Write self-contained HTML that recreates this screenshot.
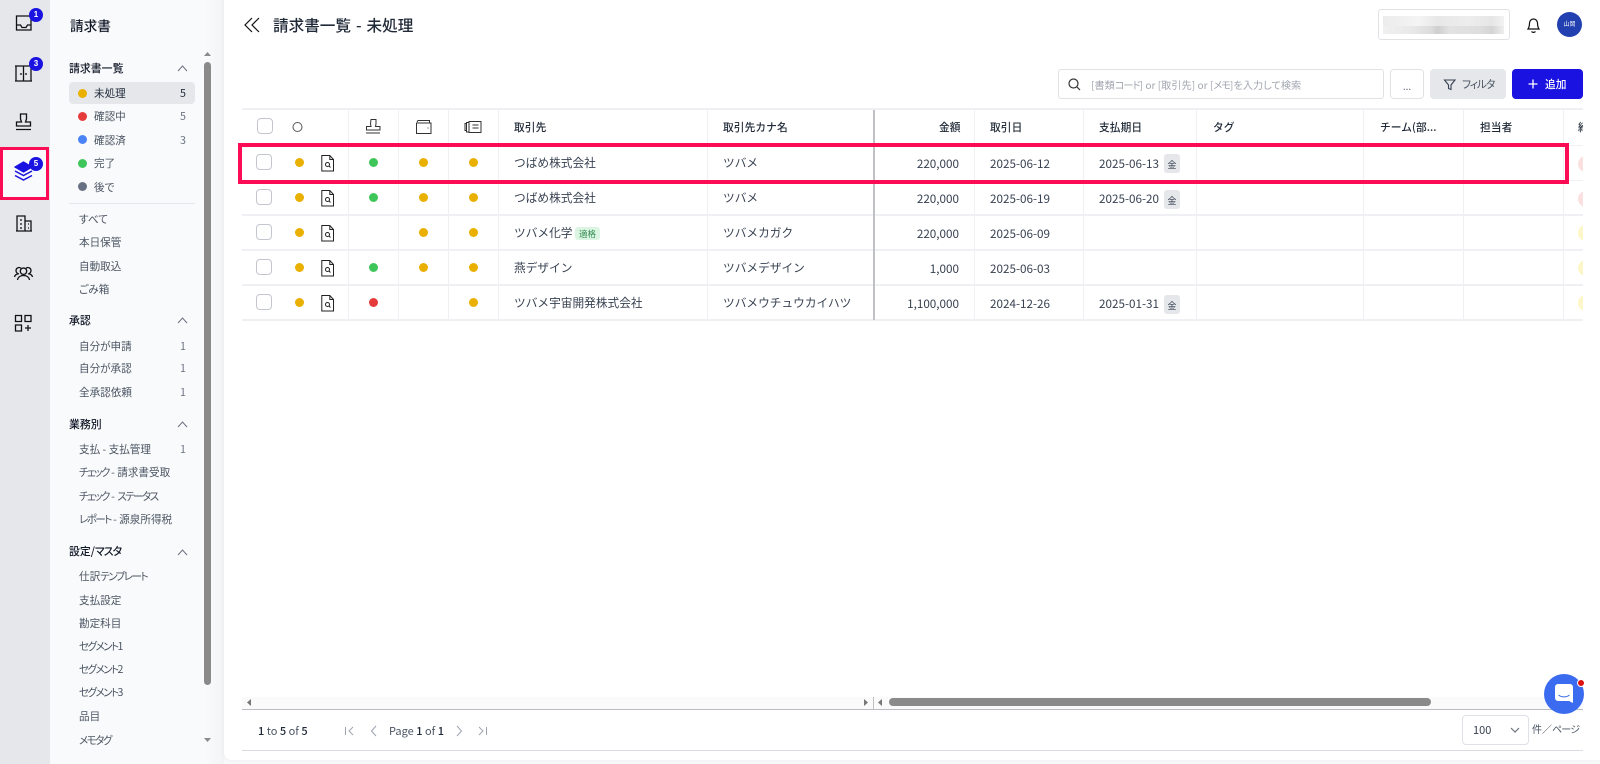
<!DOCTYPE html>
<html lang="ja"><head><meta charset="utf-8"><title>請求書一覧 - 未処理</title>
<style>
html,body{margin:0;padding:0;width:1600px;height:764px;overflow:hidden;background:#f8f9fa;}
body{position:relative;font-family:"Noto Sans CJK JP","Liberation Sans",sans-serif;}
.a{position:absolute}
.t{position:absolute;white-space:nowrap;line-height:20px;height:20px}
#rail{left:0;top:0;width:50px;height:764px;background:#e5e7eb}
#side{left:50px;top:0;width:174px;height:764px;background:linear-gradient(90deg,#f9fafb 0,#f9fafb 155px,#f3f4f6 174px)}
#main{left:224px;top:0;width:1376px;height:760px;background:#fff;border-bottom-left-radius:8px;box-shadow:0 0 5px rgba(0,0,0,.05)}
.s{font-size:10.6px;color:#4b5563;font-feature-settings:"palt";margin-top:1px}
.c{letter-spacing:-1.600px}
.h{font-size:10.9px;color:#111827;font-weight:500}
.n{font-size:10.7px;color:#6b7280;margin-top:1px}
.th{font-size:10.7px;color:#1f2937;font-weight:500;letter-spacing:.1px;margin-top:1px}
.td{font-size:11.7px;color:#374151;margin-top:1px}
.d{position:absolute;width:9px;height:9px;border-radius:50%}
.y{background:#eab000}.g{background:#3fc65a}.r{background:#e63b3b}.b{background:#4a83f5}.k{background:#687083}
.v{position:absolute;top:110px;height:210px;width:1px;background:#eef0f3}
.hl{position:absolute;left:242px;width:1341px;height:2px;background:#eef0f3}
.cb{position:absolute;left:256px;width:14px;height:14px;border:1.5px solid #c3c6ce;border-radius:4px;background:#fff}
.tag{position:absolute;left:1164px;width:16px;height:19px;background:#e5e7eb;border-radius:3px;font-size:9px;line-height:21px;text-align:center;color:#374151}
.badge{position:absolute;left:29px;width:14px;height:14px;border-radius:50%;background:#1a12e0;color:#fff;font:bold 8px/14px "Liberation Sans",sans-serif;text-align:center}
svg{position:absolute;overflow:visible}
</style></head><body>
<div id="rail" class="a"></div>
<div id="side" class="a"></div>
<div id="main" class="a"></div>
<div class="a" style="left:3px;top:150px;width:43px;height:47px;background:#f9fafb"></div>
<div class="a" style="left:0;top:147px;width:49px;height:53px;box-sizing:border-box;border:3px solid #fb0c55"></div>

<!-- rail icons -->
<svg style="left:0;top:0" width="50" height="340" fill="none" stroke="#111" stroke-width="1.3">
<path d="M16.5 16h14.5v14h-14.5z M16.5 25h4l1.5 2.5h4l1.5-2.5h3.5"/>
<path d="M15 66h17 M16 66v15h15v-15 M23.5 66v15 M15 81h17 M21 73v2 M26 73v2"/>
<path d="M20.500 114h6v5l-1 3h5v4h-14v-4h5l-1-3z M16 129.500h15"/>
<path d="M16 231h16 M17 231v-15h8v15 M25 221h6v10 M20 220h2 M20 224h2 M20 228h2 M28 224h1 M28 228h1"/>
<path d="M23.500 268a3.200 3.200 0 1 0 .01 0 M17.500 280c.5-3 3-4.500 6-4.500s5.500 1.500 6 4.500 M19 274c-2-.5-3-2-3-3.500a3 3 0 0 1 5-2.200 M28 274c2-.5 3-2 3-3.500a3 3 0 0 0-5-2.200 M14.500 277c.3-1.500 1.300-2.500 3-3 M32.500 277c-.3-1.500-1.300-2.500-3-3"/>
<path d="M15.500 315.500h6v6h-6z M25 315.500h6v6h-6z M15.500 325h6v6h-6z M28 325v6 M25 328h6"/>
<path d="M15 171l8.500 4.500 8.500-4.500 M15 175.500l8.500 4.500 8.500-4.500" stroke="#1a12e0" stroke-width="1.500"/>
<path d="M15 167l8.500-5 8.500 5-8.500 5z" fill="#1a12e0" stroke="#1a12e0"/>
</svg>
<div class="badge" style="top:8px">1</div>
<div class="badge" style="top:57px">3</div>
<div class="badge" style="top:157px">5</div>

<!-- sidebar -->
<div class="t" style="left:70px;top:15px;font-size:13.65px;color:#111827;font-weight:500">請求書</div>
<div class="t h" style="left:69px;top:58px">請求書一覧</div>
<div class="a" style="left:69px;top:82px;width:126px;height:22px;background:#e5e7eb;border-radius:4px"></div>
<div class="d y" style="left:78px;top:89px"></div><div class="t s" style="left:94px;top:83px;color:#1f2937">未処理</div><div class="t n" style="left:180px;top:83px;color:#1f2937">5</div>
<div class="d r" style="left:78px;top:112px"></div><div class="t s" style="left:94px;top:106px">確認中</div><div class="t n" style="left:180px;top:106px">5</div>
<div class="d b" style="left:78px;top:135px"></div><div class="t s" style="left:94px;top:130px">確認済</div><div class="t n" style="left:180px;top:130px">3</div>
<div class="d g" style="left:78px;top:159px"></div><div class="t s" style="left:94px;top:153px">完了</div>
<div class="d k" style="left:78px;top:182px"></div><div class="t s" style="left:94px;top:177px">後で</div>
<div class="a" style="left:69px;top:203px;width:126px;height:1px;background:#e5e7eb"></div>
<div class="t s" style="left:79px;top:209px">すべて</div>
<div class="t s" style="left:79px;top:232px">本日保管</div>
<div class="t s" style="left:79px;top:256px">自動取込</div>
<div class="t s" style="left:79px;top:279px">ごみ箱</div>
<div class="t h" style="left:69px;top:310px">承認</div>
<div class="t s" style="left:79px;top:336px">自分が申請</div><div class="t n" style="left:180px;top:336px">1</div>
<div class="t s" style="left:79px;top:358px">自分が承認</div><div class="t n" style="left:180px;top:358px">1</div>
<div class="t s" style="left:79px;top:382px">全承認依頼</div><div class="t n" style="left:180px;top:382px">1</div>
<div class="t h" style="left:69px;top:414px">業務別</div>
<div class="t s" style="left:79px;top:439px">支払 - 支払管理</div><div class="t n" style="left:180px;top:439px">1</div>
<div class="t s" style="left:79px;top:462px"><span class="c">チェック</span> - 請求書受取</div>
<div class="t s" style="left:79px;top:486px"><span class="c">チェック</span> - <span class="c">ステータス</span></div>
<div class="t s" style="left:79px;top:509px"><span class="c">レポート</span> - 源泉所得税</div>
<div class="t h" style="left:69px;top:541px;font-feature-settings:'palt'">設定/<span style="letter-spacing:-1px">マスタ</span></div>
<div class="t s" style="left:79px;top:566px">仕訳<span class="c">テンプレート</span></div>
<div class="t s" style="left:79px;top:590px">支払設定</div>
<div class="t s" style="left:79px;top:613px">勘定科目</div>
<div class="t s" style="left:79px;top:636px"><span class="c">セグメント</span>1</div>
<div class="t s" style="left:79px;top:659px"><span class="c">セグメント</span>2</div>
<div class="t s" style="left:79px;top:682px"><span class="c">セグメント</span>3</div>
<div class="t s" style="left:79px;top:706px">品目</div>
<div class="t s" style="left:79px;top:730px"><span class="c">メモタグ</span></div>
<svg style="left:0;top:0" width="224" height="764" fill="none" stroke="#6b7280" stroke-width="1">
<path d="M178 71l4.500-5 4.500 5 M178 323l4.500-5 4.500 5 M178 427l4.500-5 4.500 5 M178 555l4.500-5 4.500 5"/>
<path d="M204 56l3.500-4 3.500 4z M204 738l3.500 4 3.500-4z" fill="#8a8a8a" stroke="none"/>
</svg>
<div class="a" style="left:204px;top:62px;width:7px;height:623px;background:#8a8a8a;border-radius:4px"></div>

<!-- top bar -->
<svg style="left:244px;top:17px" width="16" height="16" fill="none" stroke="#111" stroke-width="1.200"><path d="M8 1l-7 7 7 7 M15 1l-7 7 7 7"/></svg>
<div class="t" style="left:273px;top:14px;font-size:15.600px;color:#1f2937;font-weight:500;height:22px;line-height:22px;word-spacing:1.500px">請求書一覧 - 未処理</div>
<div class="a" style="left:1378px;top:9px;width:130px;height:29px;border:1px solid #e0e2e6;border-radius:3px;background:#fff"></div>
<div class="a" style="left:1383px;top:16px;width:121px;height:18px;background:linear-gradient(90deg,#ececec,#f4f4f4 30%,#e8e8e8 45%,#ededed 70%,#e6e6e6 90%,#f2f2f2)"></div>
<div class="a" style="left:1383px;top:26px;width:121px;height:8px;background:linear-gradient(90deg,#f0f0f0,#e8e8e8 25%,#dcdcdc 40%,#cfcfcf 45%,#e2e2e2 55%,#dedede 80%,#d4d4d4 90%,#eee)"></div>
<svg style="left:1526px;top:16px" width="15" height="18" fill="none" stroke="#111" stroke-width="1.200"><path d="M2 13c1-1.500 1.500-2.500 1.500-6a4 4 0 0 1 8 0c0 3.500.5 4.500 1.500 6z M5.500 15.500c1 1.200 3 1.200 4 0"/></svg>
<div class="a" style="left:1557px;top:12px;width:25px;height:25px;border-radius:50%;background:#2240b0;color:#fff;font-size:6px;line-height:24px;text-align:center">山岡</div>

<!-- toolbar -->
<div class="a" style="left:1058px;top:69px;width:324px;height:28px;border:1px solid #e0e2e6;border-radius:3px;background:#fff"></div>
<svg style="left:1068px;top:78px" width="13" height="13" fill="none" stroke="#333" stroke-width="1.200"><circle cx="5.500" cy="5.500" r="4.500"/><path d="M9 9l3 3"/></svg>
<div class="t" style="left:1091px;top:75px;font-size:10.2px;color:#a1a6b0;font-feature-settings:'palt'">[書類<span style="letter-spacing:-1px">コード</span>] or [取引先] or [<span style="letter-spacing:-1px">メモ</span>]を入力して検索</div>
<div class="a" style="left:1390px;top:69px;width:32px;height:28px;border:1px solid #e0e2e6;border-radius:4px;background:#fff;font-size:10px;line-height:32px;text-align:center;color:#6b7280">...</div>
<div class="a" style="left:1430px;top:69px;width:76px;height:30px;background:#e5e7eb;border-radius:4px"></div>
<svg style="left:1444px;top:79px" width="12" height="12" fill="none" stroke="#374151" stroke-width="1.100"><path d="M.5 1h10.500l-4 5v4.500l-2.500-1v-3.500z"/></svg>
<div class="t" style="left:1462px;top:75px;font-size:10.7px;color:#4b5563;font-feature-settings:'palt';letter-spacing:-1px">フィルタ</div>
<div class="a" style="left:1512px;top:69px;width:71px;height:30px;background:#1a12e0;border-radius:4px"></div>
<svg style="left:1528px;top:79px" width="10" height="10" fill="none" stroke="#fff" stroke-width="1.300"><path d="M5 .5v9 M.5 5h9"/></svg>
<div class="t" style="left:1545px;top:75px;font-size:10.7px;color:#fff;font-weight:500">追加</div>

<!-- table -->
<div class="hl" style="top:108px"></div>
<div class="hl" style="top:145px;height:1px"></div>
<div class="hl" style="top:180px;height:1px"></div>
<div class="hl" style="top:214px"></div>
<div class="hl" style="top:249px"></div>
<div class="hl" style="top:284px"></div>
<div class="hl" style="top:319px"></div>
<div class="v" style="left:348px"></div><div class="v" style="left:398px"></div><div class="v" style="left:448px"></div><div class="v" style="left:498px"></div><div class="v" style="left:707px"></div>
<div class="v" style="left:873px;width:2px;background:#bfc1c5"></div>
<div class="v" style="left:974px"></div><div class="v" style="left:1083px"></div><div class="v" style="left:1196px"></div><div class="v" style="left:1363px"></div><div class="v" style="left:1463px"></div><div class="v" style="left:1563px"></div>

<!-- header -->
<div class="cb" style="top:118px;left:257px"></div>
<svg style="left:0;top:0" width="500" height="320" fill="none" stroke="#333" stroke-width="1">
<circle cx="297.500" cy="127" r="4.500" stroke="#555"/>
<path d="M371 119.500h5v4.500l-.5 2.500h4.500v3.500h-13.500v-3.500h4.500l-.5-2.500z M366 133h14"/>
<path d="M417 122l1-1.500h11.500v2.500 M416.500 123h14.500v10.500h-14.500z M427.500 128h1" />
<path d="M469 121.500h12v11h-12z M469 122.500h-2.500v9.500h2.500 M466.500 123.500h-1.500v7h1.500 M472.500 125h6 M472.500 128h6" />
</svg>
<div class="t th" style="left:514px;top:117px">取引先</div>
<div class="t th" style="left:723px;top:117px">取引先カナ名</div>
<div class="t th" style="left:939px;top:117px">金額</div>
<div class="t th" style="left:990px;top:117px">取引日</div>
<div class="t th" style="left:1099px;top:117px">支払期日</div>
<div class="t th" style="left:1213px;top:117px">タグ</div>
<div class="t th" style="left:1380px;top:117px">チーム(部...</div>
<div class="t th" style="left:1480px;top:117px">担当者</div>

<!-- rows: checkboxes -->
<div class="cb" style="top:154px"></div><div class="cb" style="top:189px"></div><div class="cb" style="top:224px"></div><div class="cb" style="top:259px"></div><div class="cb" style="top:294px"></div>
<!-- dots -->
<div class="d y" style="left:295px;top:158px"></div><div class="d y" style="left:295px;top:193px"></div><div class="d y" style="left:295px;top:228px"></div><div class="d y" style="left:295px;top:263px"></div><div class="d y" style="left:295px;top:298px"></div>
<div class="d g" style="left:369px;top:158px"></div><div class="d g" style="left:369px;top:193px"></div><div class="d g" style="left:369px;top:263px"></div><div class="d r" style="left:369px;top:298px"></div>
<div class="d y" style="left:419px;top:158px"></div><div class="d y" style="left:419px;top:193px"></div><div class="d y" style="left:419px;top:228px"></div><div class="d y" style="left:419px;top:263px"></div>
<div class="d y" style="left:469px;top:158px"></div><div class="d y" style="left:469px;top:193px"></div><div class="d y" style="left:469px;top:228px"></div><div class="d y" style="left:469px;top:263px"></div><div class="d y" style="left:469px;top:298px"></div>
<!-- doc icons -->
<svg style="left:321px;top:0" width="14" height="320" fill="none" stroke="#222" stroke-width="1">
<g><path d="M.8 155.500h8l3.700 4v11.500h-11.700z M8.800 155.500v4h3.700"/><circle cx="6.500" cy="164.500" r="2"/><path d="M8 166l1.500 1.500"/></g>
<g transform="translate(0 35)"><path d="M.8 155.500h8l3.700 4v11.500h-11.700z M8.800 155.500v4h3.700"/><circle cx="6.500" cy="164.500" r="2"/><path d="M8 166l1.500 1.500"/></g>
<g transform="translate(0 70)"><path d="M.8 155.500h8l3.700 4v11.500h-11.700z M8.800 155.500v4h3.700"/><circle cx="6.500" cy="164.500" r="2"/><path d="M8 166l1.500 1.500"/></g>
<g transform="translate(0 105)"><path d="M.8 155.500h8l3.700 4v11.500h-11.700z M8.800 155.500v4h3.700"/><circle cx="6.500" cy="164.500" r="2"/><path d="M8 166l1.500 1.500"/></g>
<g transform="translate(0 140)"><path d="M.8 155.500h8l3.700 4v11.500h-11.700z M8.800 155.500v4h3.700"/><circle cx="6.500" cy="164.500" r="2"/><path d="M8 166l1.500 1.500"/></g>
</svg>
<!-- text -->
<div class="t td" style="left:514px;top:152px">つばめ株式会社</div><div class="t td" style="left:723px;top:152px">ツバメ</div>
<div class="t td" style="left:514px;top:187px">つばめ株式会社</div><div class="t td" style="left:723px;top:187px">ツバメ</div>
<div class="t td" style="left:514px;top:222px">ツバメ化学</div><div class="a" style="left:575px;top:227px;width:25px;height:13px;background:#dcf5e3;border-radius:3px;font-size:8.500px;line-height:14px;text-align:center;color:#2f8a4e">適格</div><div class="t td" style="left:723px;top:222px">ツバメカガク</div>
<div class="t td" style="left:514px;top:257px">燕デザイン</div><div class="t td" style="left:723px;top:257px">ツバメデザイン</div>
<div class="t td" style="left:514px;top:292px">ツバメ宇宙開発株式会社</div><div class="t td" style="left:723px;top:292px">ツバメウチュウカイハツ</div>

<div class="t td" style="right:641px;top:153px">220,000</div><div class="t td" style="left:990px;top:153px">2025-06-12</div><div class="t td" style="left:1099px;top:153px">2025-06-13</div><div class="tag" style="top:154px">金</div>
<div class="t td" style="right:641px;top:188px">220,000</div><div class="t td" style="left:990px;top:188px">2025-06-19</div><div class="t td" style="left:1099px;top:188px">2025-06-20</div><div class="tag" style="top:190px">金</div>
<div class="t td" style="right:641px;top:223px">220,000</div><div class="t td" style="left:990px;top:223px">2025-06-09</div>
<div class="t td" style="right:641px;top:258px">1,000</div><div class="t td" style="left:990px;top:258px">2025-06-03</div>
<div class="t td" style="right:641px;top:293px">1,100,000</div><div class="t td" style="left:990px;top:293px">2024-12-26</div><div class="t td" style="left:1099px;top:293px">2025-01-31</div><div class="tag" style="top:295px">金</div>

<!-- clipped last column -->
<div class="a" style="left:1563px;top:110px;width:20px;height:210px;overflow:hidden">
<div class="t th" style="left:15px;top:7px">締</div>
<div class="a" style="left:15px;top:46px;width:16px;height:16px;border-radius:50%;background:#fbe0e0"></div>
<div class="a" style="left:15px;top:81px;width:16px;height:16px;border-radius:50%;background:#fbe0e0"></div>
<div class="a" style="left:15px;top:115px;width:16px;height:16px;border-radius:50%;background:#fdf6c8"></div>
<div class="a" style="left:15px;top:150px;width:16px;height:16px;border-radius:50%;background:#fdf6c8"></div>
<div class="a" style="left:15px;top:185px;width:16px;height:16px;border-radius:50%;background:#fdf6c8"></div>
</div>

<!-- highlight -->
<div class="a" style="left:238px;top:143px;width:1331px;height:41px;box-sizing:border-box;border:4px solid #fb0c55"></div>

<!-- horizontal scroll -->
<div class="a" style="left:242px;top:697px;width:1341px;height:12px;background:#fafafa"></div>
<div class="a" style="left:242px;top:709px;width:1341px;height:1px;background:#b9bcc4"></div>
<div class="a" style="left:873px;top:697px;width:1px;height:12px;background:#bfc1c5"></div>
<svg style="left:0;top:0" width="900" height="764"><path d="M251 699v7l-4-3.500z M864 699v7l4-3.500z M882 699v7l-4-3.500z" fill="#777"/></svg>
<div class="a" style="left:889px;top:698px;width:542px;height:8px;background:#8a8a8a;border-radius:4px"></div>

<!-- footer -->
<div class="t" style="left:258px;top:721px;font-size:11px;color:#4b5563"><b style="color:#1f2937;font-weight:500">1</b> to <b style="color:#1f2937;font-weight:500">5</b> of <b style="color:#1f2937;font-weight:500">5</b></div>
<svg style="left:0;top:0" width="520" height="764" fill="none" stroke="#9ca3af" stroke-width="1"><path d="M345.500 727v8 M353 727l-4 4 4 4 M376 726l-4.500 5 4.500 5 M457 726l4.500 5-4.500 5 M479 727l4 4-4 4 M486.500 727v8"/></svg>
<div class="t" style="left:389px;top:721px;font-size:11px;color:#4b5563">Page <b style="color:#1f2937;font-weight:500">1</b> of <b style="color:#1f2937;font-weight:500">1</b></div>
<div class="a" style="left:242px;top:750px;width:1341px;height:1px;background:#d9dbe0"></div>
<div class="a" style="left:1462px;top:715px;width:65px;height:28px;border:1px solid #dfe1e6;border-radius:4px;background:#fff"></div>
<div class="t" style="left:1473px;top:720px;font-size:11px;color:#374151">100</div>
<svg style="left:1510px;top:727px" width="10" height="6" fill="none" stroke="#6b7280" stroke-width="1.200"><path d="M1 1l4 4 4-4"/></svg>
<div class="t" style="left:1532px;top:719px;font-size:10px;color:#4b5563;font-feature-settings:'palt'">件／<span style="letter-spacing:-.8px">ページ</span></div>

<!-- chat -->
<div class="a" style="left:1544px;top:674px;width:40px;height:40px;border-radius:50%;background:#3b6cf0"></div>
<svg style="left:1555px;top:684px" width="19" height="20"><path d="M3 0h12a3 3 0 0 1 3 3v16l-4-2h-11a3 3 0 0 1-3-3v-11a3 3 0 0 1 3-3z" fill="#fff"/><path d="M3.500 11c3 2.500 8 2.500 11 0" fill="none" stroke="#3b6cf0" stroke-width="1"/></svg>
<div class="a" style="left:1577px;top:679px;width:6px;height:6px;border-radius:50%;background:#e01010;border:1px solid #fff"></div>
</body></html>
